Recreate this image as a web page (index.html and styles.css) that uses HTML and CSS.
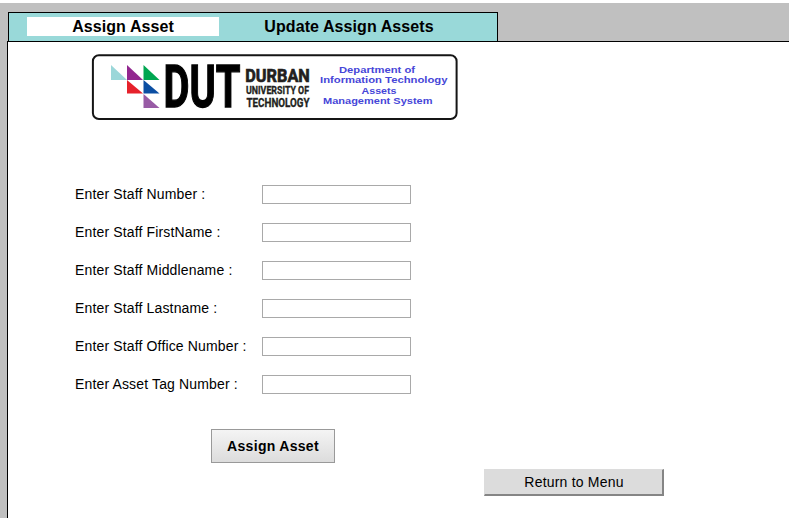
FILE: index.html
```html
<!DOCTYPE html>
<html lang="en">
<head>
<meta charset="utf-8">
<title>Assign Asset</title>
<link rel="stylesheet" href="styles.css">
</head>
<body>
<nav class="tabs">
  <a class="tab active">Assign Asset</a>
  <a class="tab">Update Assign Assets</a>
</nav>
<main class="panel">
  <svg class="logo" width="366" height="66" viewBox="92 54 366 66">
    <rect x="92.900" y="55.300" width="363.700" height="63.700" rx="6" fill="#fff" stroke="#151515" stroke-width="2"/>
    <path d="M111 65v15h16z" fill="#9bd7d9"/>
    <path d="M127 65v15h16z" fill="#92278f"/>
    <path d="M143.500 65v15h16z" fill="#00a651"/>
    <path d="M127 80v13.500h16z" fill="#e6212b"/>
    <path d="M143.500 80v13.500h16z" fill="#0b4ea2"/>
    <path d="M143.500 94v14h16z" fill="#985ba5"/>
    <text class="dut" x="163.500" y="107.300" textLength="77" lengthAdjust="spacingAndGlyphs">DUT</text>
    <g class="uni">
      <text class="durban" x="245.300" y="81.500" textLength="64.500" lengthAdjust="spacingAndGlyphs">DURBAN</text>
      <text class="univ" x="246" y="93.700" textLength="63" lengthAdjust="spacingAndGlyphs">UNIVERSITY OF</text>
      <text class="tech" x="246.500" y="107.300" textLength="63" lengthAdjust="spacingAndGlyphs">TECHNOLOGY</text>
    </g>
    <g class="dept">
      <text x="339" y="73" textLength="76" lengthAdjust="spacingAndGlyphs">Department of</text>
      <text x="320" y="83.300" textLength="127.500" lengthAdjust="spacingAndGlyphs">Information Technology</text>
      <text x="361.500" y="93.700" textLength="35" lengthAdjust="spacingAndGlyphs">Assets</text>
      <text x="323" y="104.200" textLength="109.500" lengthAdjust="spacingAndGlyphs">Management System</text>
    </g>
  </svg>
  <form class="form">
    <label class="row"><span>Enter Staff Number :</span><input type="text"></label>
    <label class="row"><span>Enter Staff FirstName :</span><input type="text"></label>
    <label class="row"><span>Enter Staff Middlename :</span><input type="text"></label>
    <label class="row"><span>Enter Staff Lastname :</span><input type="text"></label>
    <label class="row"><span>Enter Staff Office Number :</span><input type="text"></label>
    <label class="row"><span>Enter Asset Tag Number :</span><input type="text"></label>
    <button type="button" class="assign">Assign Asset</button>
  </form>
  <button type="button" class="return">Return to Menu</button>
</main>
</body>
</html>
```
FILE: styles.css
```css
* { box-sizing: border-box; }
html { background: #c0c0c0; }
body {
  margin: 0;
  height: 518px;
  overflow: hidden;
  border-top: 3px solid #fff;
  background: #c0c0c0;
  color: #000;
  font-family: "Liberation Sans", Arial, sans-serif;
  display: flex;
  flex-direction: column;
}
.tabs {
  display: flex;
  align-items: flex-start;
  width: 490px;
  height: 29px;
  margin: 9px 0 0 8px;
  padding: 4px 0 0 18px;
  border: 1px solid #000;
  border-bottom: 0;
  background: #99d9d9;
}
.tab {
  height: 19px;
  line-height: 20px;
  font-size: 16px;
  font-weight: bold;
  text-align: center;
  width: 260px;
  letter-spacing: 0.08px;
}
.tab.active { width: 192px; background: #fff; }
.panel {
  flex: 1;
  margin-left: 7px;
  border: solid #000;
  border-width: 1px 0 0 1px;
  background: #fff;
}
.logo { display: block; margin: 12px 0 0 84px; overflow: visible; }
.dut { font: bold 59px Roboto, sans-serif; fill: #000; stroke: #000; stroke-width: 1.3px; }
.uni {
  font-family: Roboto, sans-serif;
  font-weight: bold;
  fill: #231f20;
  stroke: #231f20;
  stroke-width: 0.35px;
}
.durban { font-size: 18.8px; stroke-width: 0.7px; }
.univ { font-size: 11px; }
.tech { font-size: 13.3px; }
.dept { font: bold 9.5px "Liberation Sans", Arial, sans-serif; fill: #4646d8; }
.form { margin: 65px 0 0 67px; }
.row {
  display: flex;
  align-items: center;
  height: 19px;
  margin-bottom: 19px;
  font-size: 14px;
  letter-spacing: 0.15px;
  white-space: nowrap;
}
.row span { width: 187px; padding-bottom: 2px; }
.row input {
  width: 149px;
  height: 19px;
  padding: 0 2px;
  border: 1px solid #a9a9a9;
  background: #fff;
}
.assign {
  display: block;
  width: 124px;
  height: 34px;
  margin: 35px 0 0 136px;
  padding: 0;
  border: 1px solid #999;
  background: linear-gradient(#f4f4f4, #dcdcdc);
  color: #000;
  font: bold 14px "Liberation Sans", Arial, sans-serif;
  letter-spacing: 0.3px;
}
.return {
  display: block;
  width: 180px;
  height: 27px;
  margin: 6px 0 0 476px;
  padding: 0 0 0 1px;
  border: solid;
  border-width: 1px 2px 2px 1px;
  border-color: #dcdcdc #858585 #858585 #dcdcdc;
  background: #dcdcdc;
  color: #000;
  font: 14px "Liberation Sans", Arial, sans-serif;
  letter-spacing: 0.2px;
}
```
